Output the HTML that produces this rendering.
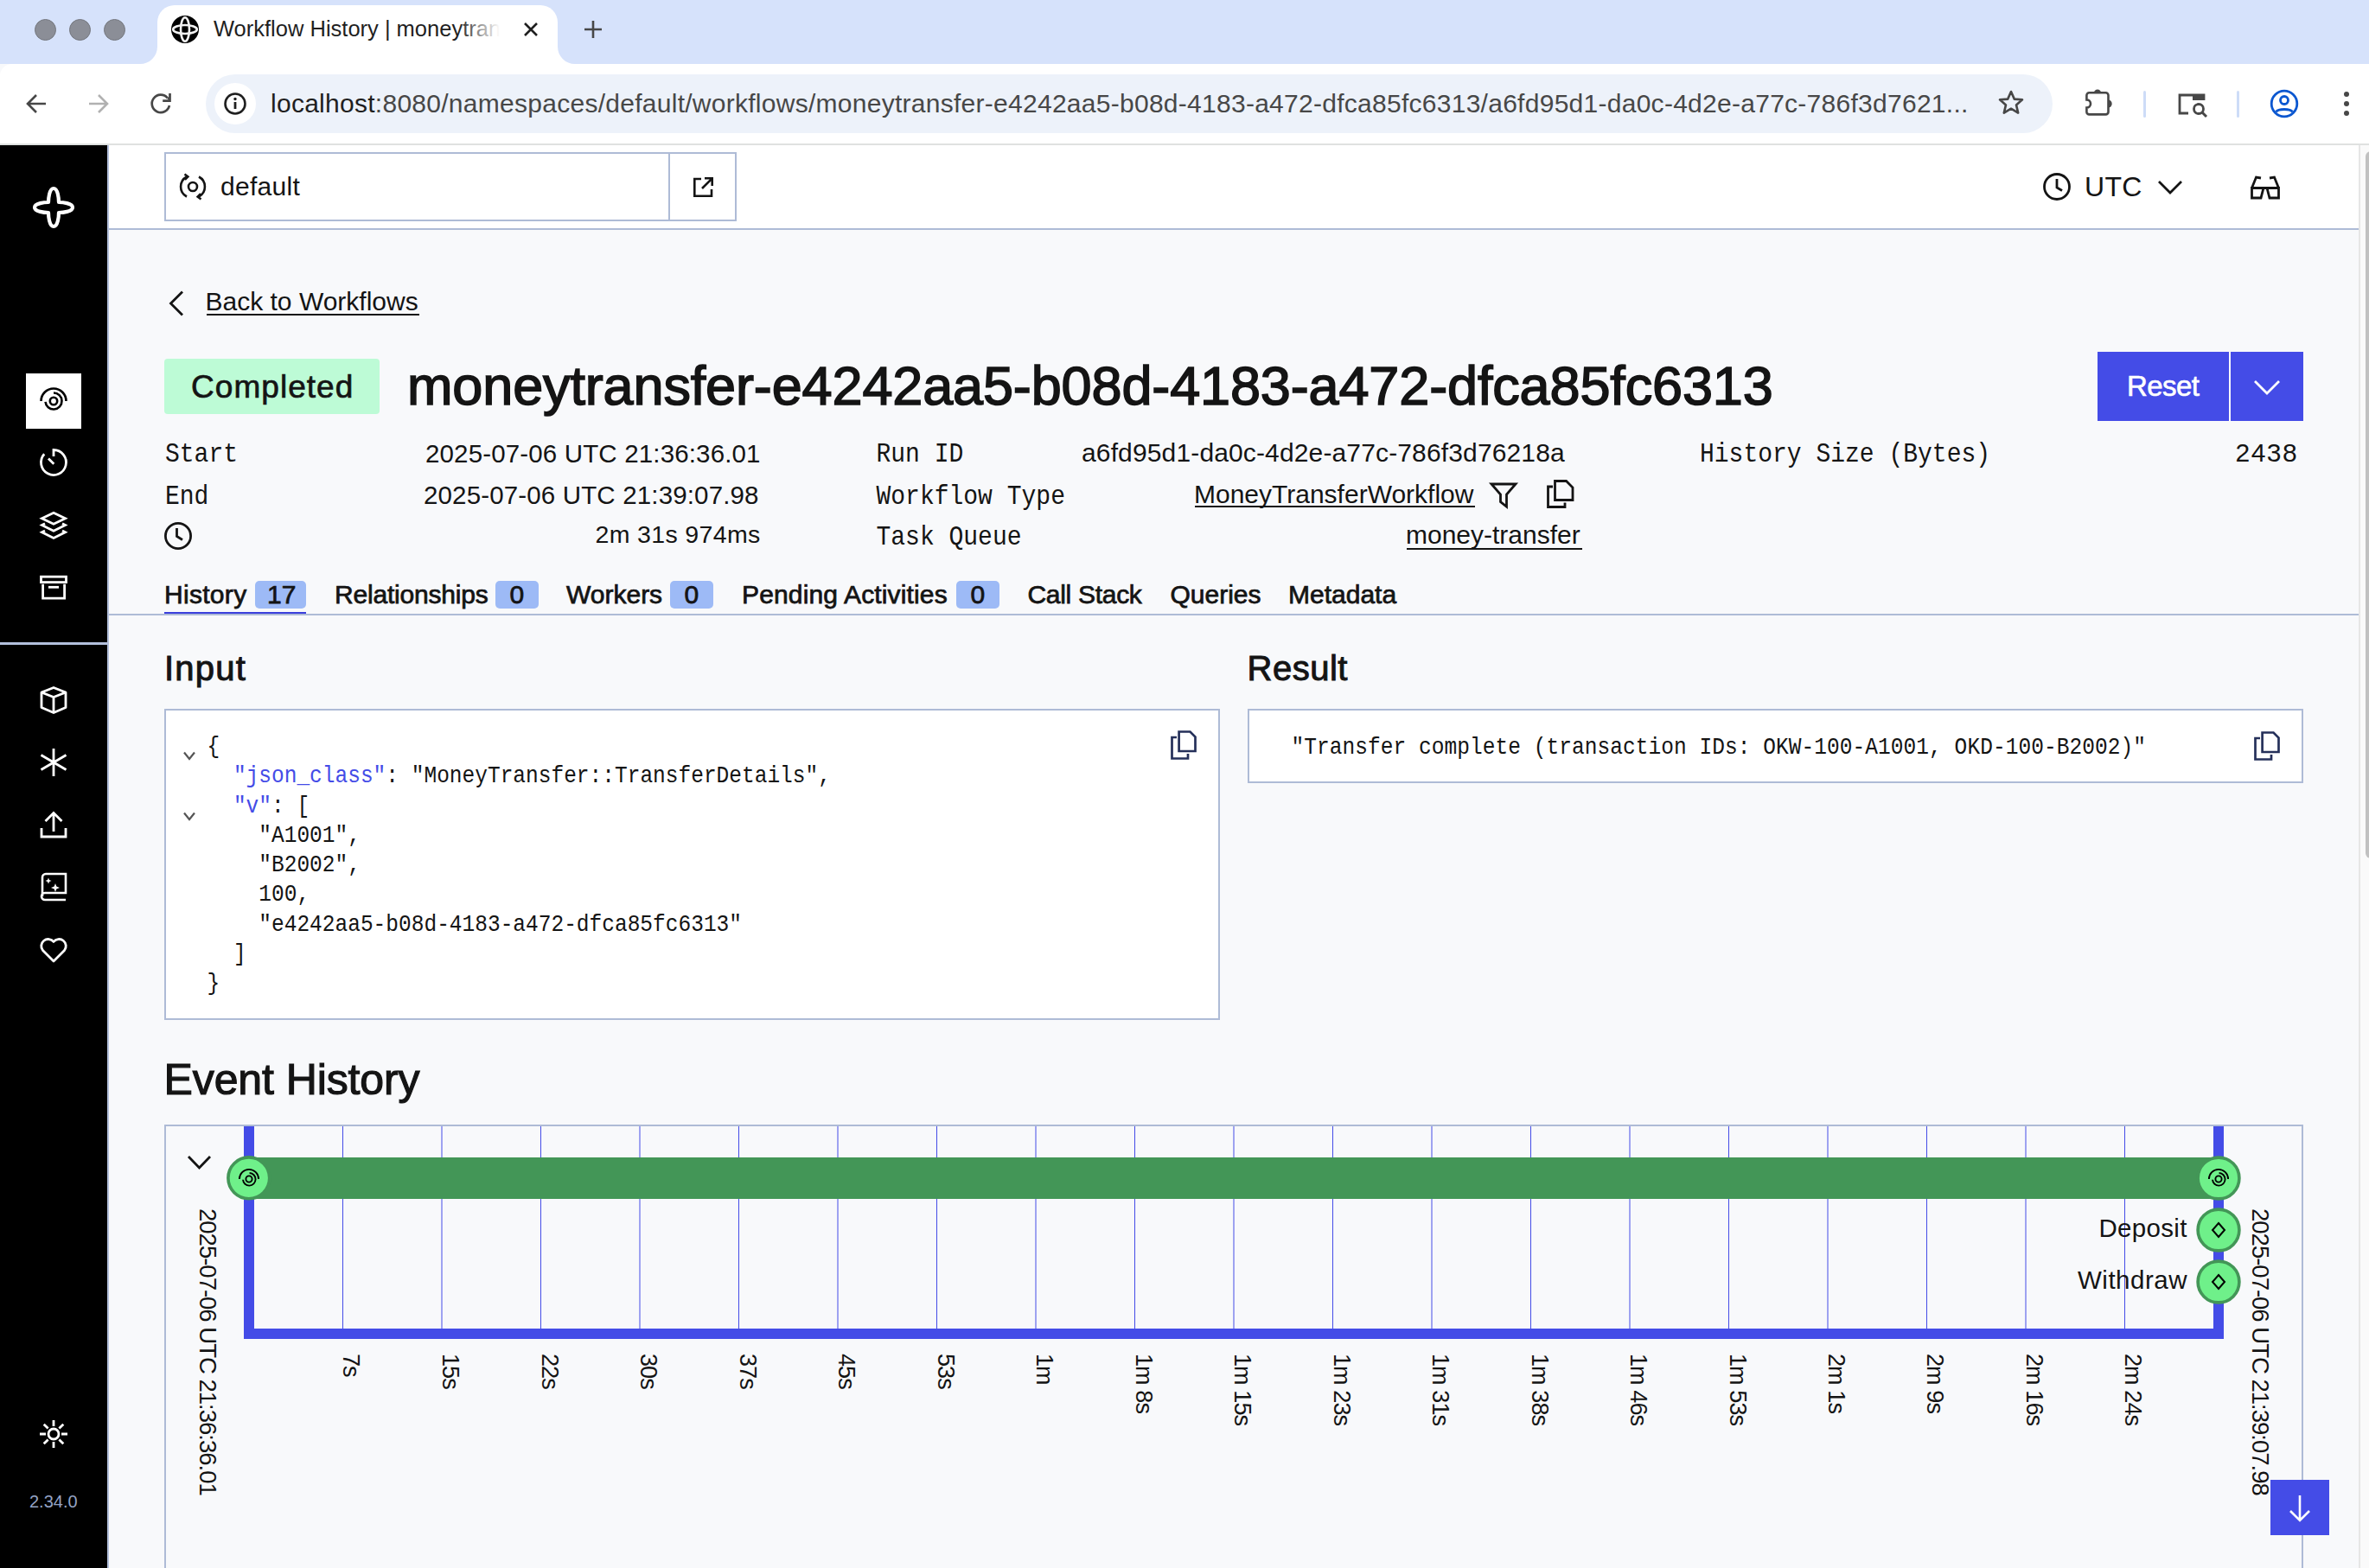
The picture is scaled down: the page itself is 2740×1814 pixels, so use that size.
<!DOCTYPE html>
<html><head><meta charset="utf-8">
<style>
*{box-sizing:border-box;margin:0;padding:0}
html,body{width:2740px;height:1814px;overflow:hidden;background:#f8f9fb;font-family:"Liberation Sans",sans-serif;color:#141414}
.a{position:absolute}
.t{position:absolute;white-space:nowrap;line-height:1;font-family:"Liberation Sans",sans-serif}
.m{position:absolute;white-space:nowrap;line-height:1;font-family:"Liberation Mono",monospace}
svg{position:absolute;overflow:visible}
</style></head>
<body>
<!-- ===== Chrome tab strip ===== -->
<div class="a" style="left:0;top:0;width:2740px;height:74px;background:#d6e2fb"></div>
<div class="a" style="left:40px;top:22px;width:25px;height:25px;border-radius:50%;background:#8b8e97;border:1px solid #74777e"></div>
<div class="a" style="left:80px;top:22px;width:25px;height:25px;border-radius:50%;background:#8b8e97;border:1px solid #74777e"></div>
<div class="a" style="left:120px;top:22px;width:25px;height:25px;border-radius:50%;background:#8b8e97;border:1px solid #74777e"></div>
<!-- active tab -->
<div class="a" style="left:182px;top:6px;width:463px;height:80px;background:#fff;border-radius:20px 20px 0 0"></div>
<svg style="left:162px;top:54px" width="20" height="20"><path d="M0 20 A20 20 0 0 0 20 0 L20 20 Z" fill="#fff"/></svg>
<svg style="left:645px;top:54px" width="20" height="20"><path d="M20 20 A20 20 0 0 1 0 0 L0 20 Z" fill="#fff"/></svg>
<!-- toolbar -->
<div class="a" style="left:0;top:74px;width:2740px;height:92px;background:#fff;border-top-left-radius:14px"></div>
<div class="a" style="left:0;top:166px;width:2740px;height:2px;background:#dfe1e0"></div>
<div class="a" style="left:238px;top:86px;width:2136px;height:68px;border-radius:34px;background:#edf2fa"></div>
<div class="a" style="left:248px;top:96px;width:48px;height:48px;border-radius:50%;background:#fff"></div>

<!-- favicon -->
<svg style="left:198px;top:18px" width="32" height="32" viewBox="0 0 32 32"><circle cx="16" cy="16" r="16" fill="#000"/><ellipse cx="16" cy="16" rx="13.8" ry="5" fill="none" stroke="#f2f2f2" stroke-width="2.6"/><ellipse cx="16" cy="16" rx="5" ry="13.8" fill="none" stroke="#f2f2f2" stroke-width="2.6"/></svg>
<div class="t" style="left:247px;top:20.5px;font-size:25.5px;color:#1f1f1f">Workflow History | moneytran</div>
<div class="a" style="left:530px;top:12px;width:60px;height:44px;background:linear-gradient(90deg,rgba(255,255,255,0),#fff 80%)"></div>
<svg style="left:606px;top:26px" width="16" height="16"><path d="M1 1L15 15M15 1L1 15" stroke="#1f1f1f" stroke-width="2.6"/></svg>
<svg style="left:676px;top:24px" width="20" height="20"><path d="M10 0V20M0 10H20" stroke="#474747" stroke-width="2.6"/></svg>
<!-- toolbar icons -->
<svg style="left:30px;top:108px" width="24" height="24"><path d="M23 12H2M12 2L2 12L12 22" fill="none" stroke="#474747" stroke-width="2.6"/></svg>
<svg style="left:102px;top:108px" width="24" height="24"><path d="M1 12H22M12 2L22 12L12 22" fill="none" stroke="#b1b1b1" stroke-width="2.6"/></svg>
<svg style="left:173px;top:107px" width="26" height="26"><path d="M20.7 6.3A10.2 10.2 0 1 0 22.9 15.0" fill="none" stroke="#474747" stroke-width="2.7"/><path d="M15.2 9.6H23.5V1" fill="none" stroke="#474747" stroke-width="2.7"/><path d="M20.2 6.8L22.6 4.5L22.6 9.6Z" fill="#474747"/></svg>
<svg style="left:259px;top:107px" width="26" height="26"><circle cx="13" cy="13" r="11.5" fill="none" stroke="#1f1f1f" stroke-width="2.6"/><path d="M13 11V19" stroke="#1f1f1f" stroke-width="2.8"/><circle cx="13" cy="7.5" r="1.7" fill="#1f1f1f"/></svg>
<div class="t" style="left:313px;top:104.5px;font-size:30px;letter-spacing:0.27px;color:#1f1f1f">localhost<span style="color:#474747">:8080/namespaces/default/workflows/moneytransfer-e4242aa5-b08d-4183-a472-dfca85fc6313/a6fd95d1-da0c-4d2e-a77c-786f3d7621...</span></div>
<svg style="left:2310px;top:103px" width="32" height="32" viewBox="0 0 32 32"><path d="M16 3L19.8 11.6L29 12.3L22 18.4L24.2 27.6L16 22.7L7.8 27.6L10 18.4L3 12.3L12.2 11.6Z" fill="none" stroke="#474747" stroke-width="2.6" stroke-linejoin="round"/></svg>
<svg style="left:2411px;top:100px" width="36" height="36" viewBox="0 0 36 36"><path d="M5.4 7.3H24.5A3 3 0 0 1 27.5 10.3V29.4A3 3 0 0 1 24.5 32.4H5.4A3 3 0 0 1 2.4 29.4V24.6A4.6 4.6 0 0 0 2.4 15.4V10.3A3 3 0 0 1 5.4 7.3Z" fill="none" stroke="#474747" stroke-width="2.6"/><path d="M10.8 7.6A4.2 4.2 0 0 1 19.2 7.6Z" fill="#474747"/><path d="M27.2 15.5A4.5 4.5 0 0 1 27.2 24.5Z" fill="#474747"/></svg>
<div class="a" style="left:2479px;top:105px;width:3px;height:31px;background:#cddcf7;border-radius:2px"></div>
<svg style="left:2519px;top:104px" width="36" height="34" viewBox="0 0 36 34"><path d="M12 27H2V6H30V12" fill="none" stroke="#474747" stroke-width="2.8"/><rect x="17" y="5" width="14" height="7" fill="#474747"/><circle cx="24" cy="22" r="5.5" fill="none" stroke="#474747" stroke-width="2.8"/><path d="M28 26L33 31" stroke="#474747" stroke-width="3"/></svg>
<div class="a" style="left:2587px;top:105px;width:3px;height:31px;background:#cddcf7;border-radius:2px"></div>
<svg style="left:2625px;top:103px" width="34" height="34" viewBox="0 0 34 34"><circle cx="17" cy="17" r="14.8" fill="none" stroke="#0b57d0" stroke-width="2.8"/><circle cx="17" cy="13" r="4.5" fill="none" stroke="#0b57d0" stroke-width="2.8"/><path d="M7.5 26.5C10 22.5 24 22.5 26.5 26.5" fill="none" stroke="#0b57d0" stroke-width="2.8"/></svg>
<svg style="left:2709px;top:103px" width="10" height="34"><circle cx="5" cy="6" r="3" fill="#474747"/><circle cx="5" cy="17" r="3" fill="#474747"/><circle cx="5" cy="28" r="3" fill="#474747"/></svg>

<!-- ===== Sidebar ===== -->
<div class="a" style="left:0;top:168px;width:124px;height:1646px;background:#000"></div>
<div class="a" style="left:124px;top:168px;width:2px;height:1646px;background:#b3c0dc"></div>
<svg style="left:38px;top:216px" width="48" height="48" viewBox="0 0 48 48"><path d="M24 2C29 2 30 14 30 18C34 18 46 19 46 24C46 29 34 30 30 30C30 34 29 46 24 46C19 46 18 34 18 30C14 30 2 29 2 24C2 19 14 18 18 18C18 14 19 2 24 2Z" fill="none" stroke="#fff" stroke-width="4.2" stroke-linejoin="round"/></svg>
<div class="a" style="left:30px;top:432px;width:64px;height:64px;background:#fff"></div>
<svg style="left:46px;top:447px" width="32" height="32" viewBox="0 0 32 32" fill="none" stroke="#000" stroke-width="2.6"><path d="M1.5 17A14.5 14.5 0 0 1 30.5 17"/><path d="M16 7.5A9.5 9.5 0 1 1 6.54 17.83"/><circle cx="16" cy="17" r="4.2"/></svg>
<svg style="left:46px;top:519px" width="32" height="32" viewBox="0 0 32 32" fill="none" stroke="#fff" stroke-width="2.8"><path d="M16 9V1.5A14.5 14.5 0 1 1 5.2 6.3"/><path d="M10 11.5L16.3 17.8"/></svg>
<svg style="left:46px;top:592px" width="32" height="32" viewBox="0 0 32 32" fill="none" stroke="#fff" stroke-width="2.8" stroke-linejoin="miter"><path d="M16 1.2L29.5 7.7L16 14.2L2.5 7.7Z"/><path d="M6 13.7L2.5 15.5L16 22.2L29.5 15.5L26 13.7"/><path d="M6 21.9L2.5 23.7L16 30.4L29.5 23.7L26 21.9"/></svg>
<svg style="left:46px;top:664px" width="32" height="32" viewBox="0 0 32 32" fill="none" stroke="#fff" stroke-width="2.8"><rect x="1.5" y="3.2" width="29" height="6.4"/><path d="M3.6 11.8V28.2H28.6V11.8"/><path d="M10 15.3H22"/></svg>
<div class="a" style="left:0;top:743px;width:124px;height:3px;background:#b3c0dc"></div>
<svg style="left:46px;top:794px" width="32" height="32" viewBox="0 0 32 32" fill="none" stroke="#fff" stroke-width="2.8" stroke-linejoin="round"><path d="M16 1.5L30 7V24.5L16 30.5L2 24.5V7Z"/><path d="M2 7L16 12.5L30 7M16 12.5V30.5"/></svg>
<svg style="left:46px;top:866px" width="32" height="32" viewBox="0 0 32 32" fill="none" stroke="#fff" stroke-width="2.8"><path d="M16 0V32M1.5 7.5L30.5 24.5M1.5 24.5L30.5 7.5"/></svg>
<svg style="left:46px;top:938px" width="32" height="32" viewBox="0 0 32 32" fill="none" stroke="#fff" stroke-width="2.8"><path d="M16 24V3M6.5 12L16 2.5L25.5 12"/><path d="M2 20V30H30V20"/></svg>
<svg style="left:46px;top:1010px" width="32" height="32" viewBox="0 0 32 32" fill="none" stroke="#fff" stroke-width="2.6"><path d="M30 31H6A4 4 0 0 1 6 23H30V1H7A4 4 0 0 0 3 5V27"/><path d="M10 5.5L11 8L13.5 9L11 10L10 12.5L9 10L6.5 9L9 8Z M18 12L19.3 15.5L23 17L19.3 18.5L18 22L16.7 18.5L13 17L16.7 15.5Z" fill="#fff" stroke="none"/></svg>
<svg style="left:46px;top:1082px" width="32" height="32" viewBox="0 0 32 32" fill="none" stroke="#fff" stroke-width="2.8" stroke-linejoin="round"><path d="M16 30L3.5 17.5A7.5 7.5 0 0 1 16 7.5A7.5 7.5 0 0 1 28.5 17.5Z"/></svg>
<svg style="left:46px;top:1643px" width="32" height="32" viewBox="0 0 32 32" fill="none" stroke="#fff" stroke-width="2.8"><circle cx="16" cy="16" r="6"/><path d="M16 0V7M16 25V32M0 16H7M25 16H32M4.7 4.7L9.6 9.6M22.4 22.4L27.3 27.3M4.7 27.3L9.6 22.4M22.4 9.6L27.3 4.7"/></svg>
<div class="t" style="left:34px;top:1727px;font-size:20px;color:#94a3c4">2.34.0</div>

<!-- ===== Header ===== -->
<div class="a" style="left:126px;top:168px;width:2602px;height:96px;background:#fff"></div>
<div class="a" style="left:126px;top:264px;width:2602px;height:2px;background:#aebbd6"></div>
<div class="a" style="left:190px;top:176px;width:662px;height:80px;border:2px solid #aebbd6;background:#fff"></div>
<div class="a" style="left:773px;top:176px;width:2px;height:80px;background:#aebbd6"></div>
<svg style="left:207px;top:200px" width="32" height="32" viewBox="0 0 32 32" fill="none" stroke="#141414" stroke-width="2.6"><path d="M9 4.5A13 13 0 0 0 9 27.5"/><path d="M23 27.5A13 13 0 0 0 23 4.5"/><circle cx="16" cy="16" r="5"/><path d="M6.5 1.5L10.5 4.5L7 8" stroke-width="2.4"/><path d="M25.5 30.5L21.5 27.5L25 24" stroke-width="2.4"/></svg>
<div class="t" style="left:255px;top:201px;font-size:30px;letter-spacing:0.3px;color:#141414">default</div>
<svg style="left:802px;top:205px" width="23" height="23" viewBox="0 0 23 23" fill="none" stroke="#141414" stroke-width="2.6"><path d="M9 2H1.3V21.7H21V14"/><path d="M13 1.3H21.7V10M21.7 1.3L10 13"/></svg>
<svg style="left:2363px;top:200px" width="32" height="32" viewBox="0 0 32 32" fill="none" stroke="#141414" stroke-width="2.8"><circle cx="16" cy="16" r="14.5"/><path d="M16 7V17L22 20.5"/></svg>
<div class="t" style="left:2411px;top:199.5px;font-size:32px;letter-spacing:0.3px;color:#141414">UTC</div>
<svg style="left:2496px;top:208px" width="28" height="18" viewBox="0 0 28 18" fill="none" stroke="#141414" stroke-width="2.8"><path d="M1 2L14 15L27 2"/></svg>
<svg style="left:2603px;top:203px" width="34" height="28" viewBox="0 0 34 28" fill="none" stroke="#141414" stroke-width="2.8"><path d="M1.5 26V14.5H32.5V26H22L19 14.5H15L12 26Z"/><path d="M1.5 14.5L6.5 2L12 3M32.5 14.5L27.5 2L22 3"/></svg>

<!-- ===== Main: back + title ===== -->
<svg style="left:194px;top:336px" width="20" height="30" viewBox="0 0 20 30" fill="none" stroke="#141414" stroke-width="2.8"><path d="M17 1.5L3.5 15L17 28.5"/></svg>
<div class="t" style="left:237.5px;top:333.5px;font-size:30px;letter-spacing:0px;color:#141414">Back to Workflows</div>
<div class="a" style="left:238.5px;top:362.5px;width:246px;height:2px;background:#141414"></div>
<div class="a" style="left:190px;top:415px;width:249px;height:64px;background:#bdfbd6;border-radius:4px"></div>
<div class="t" style="left:221px;top:428.5px;font-size:37px;letter-spacing:1.05px;color:#141414;-webkit-text-stroke:0.7px #141414">Completed</div>
<div class="t" style="left:471px;top:414.8px;font-size:63px;letter-spacing:-0.14px;color:#141414;-webkit-text-stroke:1.6px #141414">moneytransfer-e4242aa5-b08d-4183-a472-dfca85fc6313</div>
<div class="a" style="left:2426px;top:407px;width:152px;height:80px;background:#444ce7"></div>
<div class="a" style="left:2580px;top:407px;width:84px;height:80px;background:#444ce7"></div>
<div class="t" style="left:2460px;top:430px;font-size:33px;letter-spacing:-0.6px;color:#fff;-webkit-text-stroke:0.6px #fff">Reset</div>
<svg style="left:2607px;top:439px" width="30" height="19" viewBox="0 0 30 19" fill="none" stroke="#fff" stroke-width="2.8"><path d="M1 2L15 16L29 2"/></svg>

<!-- details -->
<div class="m" style="left:191px;top:513.2px;font-size:28px;transform-origin:0 21.3px;transform:scaleY(1.14);color:#141414">Start</div>
<div class="m" style="left:191px;top:561.5px;font-size:28px;transform-origin:0 21.3px;transform:scaleY(1.14);color:#141414">End</div>
<svg style="left:189px;top:603px" width="34" height="34" viewBox="0 0 34 34" fill="none" stroke="#141414" stroke-width="2.8"><circle cx="17" cy="17" r="14.6"/><path d="M15.5 8V17.5L22 21.5"/></svg>
<div class="t" style="left:492px;top:510px;font-size:29.5px;letter-spacing:0.15px;color:#141414">2025-07-06 UTC 21:36:36.01</div>
<div class="t" style="left:490px;top:558px;font-size:29.5px;letter-spacing:0.15px;color:#141414">2025-07-06 UTC 21:39:07.98</div>
<div class="t" style="left:688.5px;top:604px;font-size:28.5px;letter-spacing:0.35px;color:#141414">2m 31s 974ms</div>
<div class="m" style="left:1013.5px;top:513.2px;font-size:28px;transform-origin:0 21.3px;transform:scaleY(1.14);color:#141414">Run ID</div>
<div class="m" style="left:1013.5px;top:561.5px;font-size:28px;transform-origin:0 21.3px;transform:scaleY(1.14);color:#141414">Workflow Type</div>
<div class="m" style="left:1013.5px;top:608.7px;font-size:28px;transform-origin:0 21.3px;transform:scaleY(1.14);color:#141414">Task Queue</div>
<div class="t" style="left:1251px;top:509px;font-size:30px;letter-spacing:0.14px;color:#141414">a6fd95d1-da0c-4d2e-a77c-786f3d76218a</div>
<div class="t" style="left:1381px;top:556.5px;font-size:30px;color:#141414">MoneyTransferWorkflow</div>
<div class="a" style="left:1382px;top:585px;width:324px;height:2px;background:#141414"></div>
<svg style="left:1722px;top:558px" width="34" height="30" viewBox="0 0 34 30" fill="none" stroke="#141414" stroke-width="2.8" stroke-linejoin="miter"><path d="M3 2H31L20.5 14V28L13.5 22.5V14Z"/></svg>
<svg style="left:1789px;top:555px" width="32" height="33" viewBox="0 0 32 33" fill="none" stroke="#141414" stroke-width="2.8"><path d="M9.5 1.5H22.5L30 9V23.5H9.5Z"/><path d="M7 8H1.5V31.5H21V26.5"/></svg>
<div class="t" style="left:1626px;top:604px;font-size:30px;color:#141414">money-transfer</div>
<div class="a" style="left:1627px;top:633.5px;width:203px;height:2px;background:#141414"></div>
<div class="m" style="left:1966px;top:513.2px;font-size:28px;transform-origin:0 21.3px;transform:scaleY(1.14);color:#141414">History Size (Bytes)</div>
<div class="t" style="left:2585.5px;top:509px;font-size:30px;letter-spacing:1.5px;color:#141414">2438</div>

<!-- tabs -->
<div class="t" style="left:190px;top:672.5px;font-size:30px;letter-spacing:0.3px;color:#141414;-webkit-text-stroke:0.75px #141414">History</div>
<div class="a" style="left:295px;top:672px;width:59px;height:32px;background:#9dbaf6;border-radius:5px"></div>
<div class="t" style="left:309px;top:672.5px;font-size:30px;color:#141414;-webkit-text-stroke:0.75px #141414">17</div>
<div class="t" style="left:387px;top:672.5px;font-size:30px;letter-spacing:-0.2px;color:#141414;-webkit-text-stroke:0.75px #141414">Relationships</div>
<div class="a" style="left:573px;top:672px;width:50px;height:32px;background:#9dbaf6;border-radius:5px"></div>
<div class="t" style="left:589.5px;top:672.5px;font-size:30px;color:#141414;-webkit-text-stroke:0.75px #141414">0</div>
<div class="t" style="left:655px;top:672.5px;font-size:30px;letter-spacing:0px;color:#141414;-webkit-text-stroke:0.75px #141414">Workers</div>
<div class="a" style="left:775px;top:672px;width:50px;height:32px;background:#9dbaf6;border-radius:5px"></div>
<div class="t" style="left:791.5px;top:672.5px;font-size:30px;color:#141414;-webkit-text-stroke:0.75px #141414">0</div>
<div class="t" style="left:858px;top:672.5px;font-size:30px;letter-spacing:0.15px;color:#141414;-webkit-text-stroke:0.75px #141414">Pending Activities</div>
<div class="a" style="left:1106px;top:672px;width:50px;height:32px;background:#9dbaf6;border-radius:5px"></div>
<div class="t" style="left:1122.5px;top:672.5px;font-size:30px;color:#141414;-webkit-text-stroke:0.75px #141414">0</div>
<div class="t" style="left:1188.5px;top:672.5px;font-size:30px;letter-spacing:-0.3px;color:#141414;-webkit-text-stroke:0.75px #141414">Call Stack</div>
<div class="t" style="left:1353.5px;top:672.5px;font-size:30px;color:#141414;-webkit-text-stroke:0.75px #141414">Queries</div>
<div class="t" style="left:1490px;top:672.5px;font-size:30px;color:#141414;-webkit-text-stroke:0.75px #141414">Metadata</div>
<div class="a" style="left:126px;top:710px;width:2602px;height:2px;background:#aebbd6"></div>
<div class="a" style="left:190px;top:708px;width:164px;height:2px;background:#3b3fdc"></div>

<!-- ===== Input / Result ===== -->
<div class="t" style="left:190px;top:753px;font-size:40px;letter-spacing:1.25px;color:#141414;-webkit-text-stroke:1px #141414">Input</div>
<div class="t" style="left:1442.5px;top:753px;font-size:40px;letter-spacing:0.5px;color:#141414;-webkit-text-stroke:1px #141414">Result</div>
<div class="a" style="left:190px;top:820px;width:1221px;height:360px;border:2px solid #aebbd6;background:#fff"></div>
<div class="a" style="left:1443px;top:820px;width:1221px;height:86px;border:2px solid #aebbd6;background:#fff"></div>
<svg style="left:1354px;top:845px" width="32" height="34" viewBox="0 0 32 34" fill="none" stroke="#25305a" stroke-width="2.7" stroke-linejoin="miter"><path d="M9.6 1.5H22.5L28.5 7.5V24H9.6Z"/><path d="M7 8H1.5V32.5H20V27"/></svg>
<svg style="left:2607px;top:846px" width="32" height="34" viewBox="0 0 32 34" fill="none" stroke="#25305a" stroke-width="2.7" stroke-linejoin="miter"><path d="M9.6 1.5H22.5L28.5 7.5V24H9.6Z"/><path d="M7 8H1.5V32.5H20V27"/></svg>
<svg style="left:212px;top:869px" width="14" height="11" viewBox="0 0 14 11" fill="none" stroke="#555" stroke-width="2.2"><path d="M1 1.5L7 9L13 1.5"/></svg>
<svg style="left:212px;top:938.5px" width="14" height="11" viewBox="0 0 14 11" fill="none" stroke="#555" stroke-width="2.2"><path d="M1 1.5L7 9L13 1.5"/></svg>
<div class="m" style="left:239.5px;top:852.9px;font-size:24.5px;transform-origin:0 18.6px;transform:scaleY(1.12);color:#141414">{</div>
<div class="m" style="left:269.9px;top:887.2px;font-size:24.5px;transform-origin:0 18.6px;transform:scaleY(1.12);color:#141414"><span style="color:#444ce7">"json_class"</span>: "MoneyTransfer::TransferDetails",</div>
<div class="m" style="left:269.9px;top:921.5px;font-size:24.5px;transform-origin:0 18.6px;transform:scaleY(1.12);color:#141414"><span style="color:#444ce7">"v"</span>: [</div>
<div class="m" style="left:299.3px;top:955.8px;font-size:24.5px;transform-origin:0 18.6px;transform:scaleY(1.12);color:#141414">"A1001",</div>
<div class="m" style="left:299.3px;top:990.1px;font-size:24.5px;transform-origin:0 18.6px;transform:scaleY(1.12);color:#141414">"B2002",</div>
<div class="m" style="left:299.3px;top:1024.4px;font-size:24.5px;transform-origin:0 18.6px;transform:scaleY(1.12);color:#141414">100,</div>
<div class="m" style="left:299.3px;top:1058.7px;font-size:24.5px;transform-origin:0 18.6px;transform:scaleY(1.12);color:#141414">"e4242aa5-b08d-4183-a472-dfca85fc6313"</div>
<div class="m" style="left:269.9px;top:1093.0px;font-size:24.5px;transform-origin:0 18.6px;transform:scaleY(1.12);color:#141414">]</div>
<div class="m" style="left:239.5px;top:1127.3px;font-size:24.5px;transform-origin:0 18.6px;transform:scaleY(1.12);color:#141414">}</div>
<div class="m" style="left:1493.5px;top:853.9px;font-size:24.5px;transform-origin:0 18.6px;transform:scaleY(1.12);letter-spacing:0.05px;color:#141414">"Transfer complete (transaction IDs: OKW-100-A1001, OKD-100-B2002)"</div>

<!-- ===== Event History ===== -->
<div class="t" style="left:189.5px;top:1223.5px;font-size:50px;letter-spacing:-0.1px;color:#141414;-webkit-text-stroke:1.2px #141414">Event History</div>
<div class="a" style="left:190px;top:1301px;width:2474px;height:600px;border:2px solid #aebbd6"></div>
<svg style="left:0;top:0" width="2740" height="1814">
<line x1="396.5" y1="1303" x2="396.5" y2="1537" stroke="#444ce7" stroke-width="1"/><line x1="511.0" y1="1303" x2="511.0" y2="1537" stroke="#444ce7" stroke-width="1"/><line x1="625.5" y1="1303" x2="625.5" y2="1537" stroke="#444ce7" stroke-width="1"/><line x1="740.0" y1="1303" x2="740.0" y2="1537" stroke="#444ce7" stroke-width="1"/><line x1="854.5" y1="1303" x2="854.5" y2="1537" stroke="#444ce7" stroke-width="1"/><line x1="969.0" y1="1303" x2="969.0" y2="1537" stroke="#444ce7" stroke-width="1"/><line x1="1083.5" y1="1303" x2="1083.5" y2="1537" stroke="#444ce7" stroke-width="1"/><line x1="1198.0" y1="1303" x2="1198.0" y2="1537" stroke="#444ce7" stroke-width="1"/><line x1="1312.5" y1="1303" x2="1312.5" y2="1537" stroke="#444ce7" stroke-width="1"/><line x1="1427.0" y1="1303" x2="1427.0" y2="1537" stroke="#444ce7" stroke-width="1"/><line x1="1541.5" y1="1303" x2="1541.5" y2="1537" stroke="#444ce7" stroke-width="1"/><line x1="1656.0" y1="1303" x2="1656.0" y2="1537" stroke="#444ce7" stroke-width="1"/><line x1="1770.5" y1="1303" x2="1770.5" y2="1537" stroke="#444ce7" stroke-width="1"/><line x1="1885.0" y1="1303" x2="1885.0" y2="1537" stroke="#444ce7" stroke-width="1"/><line x1="1999.5" y1="1303" x2="1999.5" y2="1537" stroke="#444ce7" stroke-width="1"/><line x1="2114.0" y1="1303" x2="2114.0" y2="1537" stroke="#444ce7" stroke-width="1"/><line x1="2228.5" y1="1303" x2="2228.5" y2="1537" stroke="#444ce7" stroke-width="1"/><line x1="2343.0" y1="1303" x2="2343.0" y2="1537" stroke="#444ce7" stroke-width="1"/><line x1="2457.5" y1="1303" x2="2457.5" y2="1537" stroke="#444ce7" stroke-width="1"/>
<rect x="282" y="1303" width="12" height="246" fill="#444ce7"/>
<rect x="2560" y="1303" width="12" height="246" fill="#444ce7"/>
<rect x="282" y="1537" width="2290" height="12" fill="#444ce7"/>
<rect x="288" y="1339" width="2278" height="48" fill="#439657"/>
<circle cx="287.8" cy="1362.8" r="23.9" fill="#6ff08a" stroke="#439657" stroke-width="3.6"/>
<circle cx="2566" cy="1363" r="23.9" fill="#6ff08a" stroke="#439657" stroke-width="3.6"/>
<circle cx="2566" cy="1423" r="23.9" fill="#6ff08a" stroke="#439657" stroke-width="3.6"/>
<circle cx="2566" cy="1483" r="23.9" fill="#6ff08a" stroke="#439657" stroke-width="3.6"/>
<g fill="none" stroke="#000" stroke-width="1.9"><path d="M276.9 1364A11.1 11.1 0 0 1 299.1 1364"/><path d="M288.6 1357A7.3 7.3 0 1 1 281 1364.8"/><circle cx="288" cy="1364" r="3.6"/></g>
<g fill="none" stroke="#000" stroke-width="1.9"><path d="M2554.9 1364A11.1 11.1 0 0 1 2577.1 1364"/><path d="M2566.6 1357A7.3 7.3 0 1 1 2559 1364.8"/><circle cx="2566" cy="1364" r="3.6"/></g>
<path d="M2566 1415L2573 1423L2566 1431L2559 1423Z" fill="none" stroke="#000" stroke-width="2"/>
<path d="M2566 1475L2573 1483L2566 1491L2559 1483Z" fill="none" stroke="#000" stroke-width="2"/>
<path d="M218 1338L230.5 1351L243 1338" fill="none" stroke="#141414" stroke-width="2.8"/>
</svg>
<div class="t" style="left:2427.5px;top:1406px;font-size:29.5px;letter-spacing:0.3px;color:#141414">Deposit</div>
<div class="t" style="left:2403px;top:1466px;font-size:29.5px;letter-spacing:0.5px;color:#141414">Withdraw</div>
<div class="t" style="left:254.4px;top:1398px;font-size:27.5px;letter-spacing:-1.0px;color:#141414;transform-origin:0 0;transform:rotate(90deg)">2025-07-06 UTC 21:36:36.01</div>
<div class="t" style="left:2627.9px;top:1398px;font-size:27.5px;letter-spacing:-1.0px;color:#141414;transform-origin:0 0;transform:rotate(90deg)">2025-07-06 UTC 21:39:07.98</div>
<div class="t" style="left:419.4px;top:1566px;font-size:27px;letter-spacing:-0.9px;color:#141414;transform-origin:0 0;transform:rotate(90deg)">7s</div>
<div class="t" style="left:534.0px;top:1566px;font-size:27px;letter-spacing:-0.9px;color:#141414;transform-origin:0 0;transform:rotate(90deg)">15s</div>
<div class="t" style="left:648.5px;top:1566px;font-size:27px;letter-spacing:-0.9px;color:#141414;transform-origin:0 0;transform:rotate(90deg)">22s</div>
<div class="t" style="left:763.0px;top:1566px;font-size:27px;letter-spacing:-0.9px;color:#141414;transform-origin:0 0;transform:rotate(90deg)">30s</div>
<div class="t" style="left:877.5px;top:1566px;font-size:27px;letter-spacing:-0.9px;color:#141414;transform-origin:0 0;transform:rotate(90deg)">37s</div>
<div class="t" style="left:992.0px;top:1566px;font-size:27px;letter-spacing:-0.9px;color:#141414;transform-origin:0 0;transform:rotate(90deg)">45s</div>
<div class="t" style="left:1106.5px;top:1566px;font-size:27px;letter-spacing:-0.9px;color:#141414;transform-origin:0 0;transform:rotate(90deg)">53s</div>
<div class="t" style="left:1221.0px;top:1566px;font-size:27px;letter-spacing:-0.9px;color:#141414;transform-origin:0 0;transform:rotate(90deg)">1m</div>
<div class="t" style="left:1335.5px;top:1566px;font-size:27px;letter-spacing:-0.9px;color:#141414;transform-origin:0 0;transform:rotate(90deg)">1m 8s</div>
<div class="t" style="left:1450.0px;top:1566px;font-size:27px;letter-spacing:-0.9px;color:#141414;transform-origin:0 0;transform:rotate(90deg)">1m 15s</div>
<div class="t" style="left:1564.5px;top:1566px;font-size:27px;letter-spacing:-0.9px;color:#141414;transform-origin:0 0;transform:rotate(90deg)">1m 23s</div>
<div class="t" style="left:1679.0px;top:1566px;font-size:27px;letter-spacing:-0.9px;color:#141414;transform-origin:0 0;transform:rotate(90deg)">1m 31s</div>
<div class="t" style="left:1793.5px;top:1566px;font-size:27px;letter-spacing:-0.9px;color:#141414;transform-origin:0 0;transform:rotate(90deg)">1m 38s</div>
<div class="t" style="left:1908.0px;top:1566px;font-size:27px;letter-spacing:-0.9px;color:#141414;transform-origin:0 0;transform:rotate(90deg)">1m 46s</div>
<div class="t" style="left:2022.5px;top:1566px;font-size:27px;letter-spacing:-0.9px;color:#141414;transform-origin:0 0;transform:rotate(90deg)">1m 53s</div>
<div class="t" style="left:2136.9px;top:1566px;font-size:27px;letter-spacing:-0.9px;color:#141414;transform-origin:0 0;transform:rotate(90deg)">2m 1s</div>
<div class="t" style="left:2251.4px;top:1566px;font-size:27px;letter-spacing:-0.9px;color:#141414;transform-origin:0 0;transform:rotate(90deg)">2m 9s</div>
<div class="t" style="left:2365.9px;top:1566px;font-size:27px;letter-spacing:-0.9px;color:#141414;transform-origin:0 0;transform:rotate(90deg)">2m 16s</div>
<div class="t" style="left:2480.4px;top:1566px;font-size:27px;letter-spacing:-0.9px;color:#141414;transform-origin:0 0;transform:rotate(90deg)">2m 24s</div>

<div class="a" style="left:2626px;top:1712px;width:68px;height:64px;background:#444ce7"></div>
<svg style="left:2644px;top:1728px" width="32" height="34" viewBox="0 0 32 34" fill="none" stroke="#fff" stroke-width="2.6"><path d="M16 2V31M5 20L16 31L27 20"/></svg>
<!-- scrollbar -->
<div class="a" style="left:2728px;top:168px;width:2px;height:1646px;background:#e6e6e6"></div>
<div class="a" style="left:2730px;top:168px;width:10px;height:1646px;background:#fafafa"></div>
<div class="a" style="left:2736px;top:175px;width:12px;height:818px;background:#c1c1c1;border-radius:6px"></div>
<script>(function(){var w=window.innerWidth;if(w&&Math.abs(w-2740)>2){document.documentElement.style.zoom=(w/2740);}})();</script>
</body></html>
